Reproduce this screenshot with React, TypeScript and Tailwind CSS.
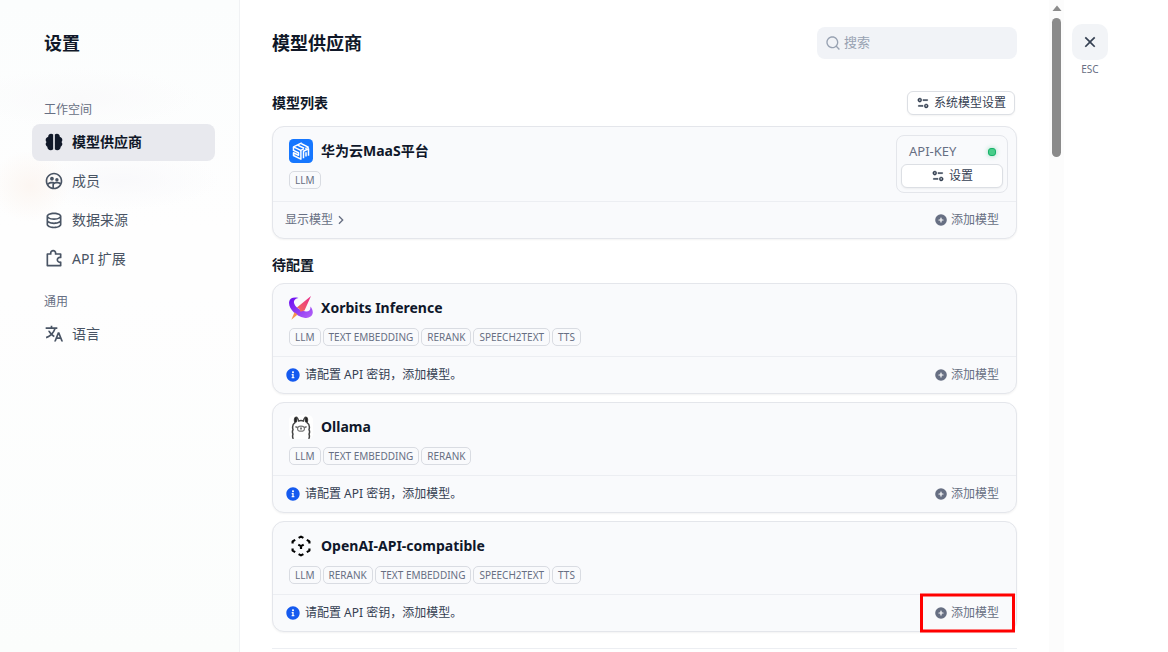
import type { ReactNode } from "react";
import {
  RiArrowRightSLine,
  RiBrain2Fill,
  RiCloseLine,
  RiDatabase2Line,
  RiEqualizer2Line,
  RiGroup2Line,
  RiInformation2Fill,
  RiPuzzle2Line,
  RiSearchLine,
  RiTranslate2,
} from "react-icons/ri";

function AddIcon() {
  return (
    <svg viewBox="0 0 14 14" className="size-3.5" aria-hidden="true">
      <circle cx="7" cy="7" r="5.8" fill="currentColor" />
      <path d="M7 5v4M5 7h4" stroke="#fff" strokeWidth="1.2" strokeLinecap="round" />
    </svg>
  );
}

function MaasLogo() {
  return (
    <svg viewBox="0 0 24 24" className="size-6" aria-hidden="true">
      <rect width="24" height="24" rx="4.5" fill="#1677ff" />
      <g fill="none" stroke="#fff" strokeWidth="1.5" strokeLinejoin="round">
        <path d="m12.800 3.800-8.300 4.100 7.200 3.500 3.100-1.500" />
        <path d="m8.500 6.100 6.700 3.200M12.400 4.800l6.900 3.300-3 1.500" />
        <path d="M4.500 8v3.400l5 2.400v2.400l-5-2.400v2.700l7.400 3.600v-8.500" />
        <path d="M14.500 19.200v-7l5-2.400v7M17 17.600v-4.400" />
      </g>
    </svg>
  );
}

function XorbitsLogo() {
  return (
    <svg viewBox="0 0 24 24" className="size-6" aria-hidden="true">
      <defs>
        <linearGradient id="xorbits-ring" x1="0" y1="0" x2="1" y2="1">
          <stop offset="0" stopColor="#6a0cf0" />
          <stop offset="1" stopColor="#b565f7" />
        </linearGradient>
        <linearGradient id="xorbits-needle" x1="1" y1="0" x2="0" y2="1">
          <stop offset="0" stopColor="#e9298c" />
          <stop offset="1" stopColor="#f5705a" />
        </linearGradient>
      </defs>
      <path
        d="M9.500 1.900C4.200.9.600 2.200.1 6c-.8 6.500 7 14.400 15 15.700 4.700.8 8-1 8.600-4.400.4-2.400-.6-4.800-2.300-6.800.4 3.500-1.300 5-4.400 4.900C11.500 15.200 5.200 10.500 4.900 6.300 4.800 4 6.400 2.500 9.500 1.900Z"
        fill="url(#xorbits-ring)"
      />
      <path d="M22 0 7.900 11.600l2.600 1.300 1 2.900 4-1.300Z" fill="url(#xorbits-needle)" />
      <path d="m5.500 16.300 3.100 2.200-6.200 5.200Z" fill="#f6934f" />
    </svg>
  );
}

function OllamaLogo() {
  return (
    <svg viewBox="0 0 24 24" className="size-6" aria-hidden="true">
      <rect width="24" height="24" rx="5" fill="#fff" />
      <g fill="none" stroke="#444" strokeWidth="1.500" strokeLinecap="round" strokeLinejoin="round">
        <path d="M4 23.300c-.6-1.500-.5-3 0-4.300-.8-1.400-.7-3 0-4.400C3.100 11.500 3.700 9 6 7.600 5.300 5 5.600 2.800 6.700 2.400c1.500-.4 2.500 1.600 2.800 3.700 1.600-.7 3.400-.7 5 0 .3-2.100 1.300-4.100 2.800-3.700 1.100.4 1.400 2.600.7 5.200 2.300 1.400 2.900 3.900 2 7 .7 1.400.8 3 0 4.400.5 1.300.6 2.800 0 4.300" />
        <path d="M6.900 3.500v3M17.100 3.500v3" stroke="#222" strokeWidth="2" />
        <path d="M6.800 11.800c1 .2 1.700.5 2 1M17.200 11.800c-1 .2-1.700.5-2 1" strokeWidth="1.200" />
        <ellipse cx="12" cy="13.700" rx="3.500" ry="2.500" stroke="#777" strokeWidth="1.200" />
        <path d="M12 13v1" strokeWidth="1.400" />
      </g>
    </svg>
  );
}

function CompatibleLogo() {
  return (
    <svg viewBox="0 0 24 24" className="size-6" aria-hidden="true">
      <g fill="none" stroke="#000" strokeWidth="2.200" strokeLinejoin="round">
        <path d="m9.600 3.900 2.400-1.300 2.400 1.300M9.600 20.100l2.400 1.300 2.400-1.300" />
        <path d="M6.200 5.900 3.600 7.400v2M17.800 5.900l2.600 1.500v2" />
        <path d="M3.600 14.600v2l2.600 1.500M20.400 14.600v2l-2.600 1.500" />
        <path d="m9.300 10.600 2.700 1.500 2.700-1.500M12 12.100v3" />
      </g>
    </svg>
  );
}

type NavItem = { label: string; icon: ReactNode; active?: boolean };

const workspaceItems: NavItem[] = [
  { label: "模型供应商", icon: <RiBrain2Fill className="size-5" />, active: true },
  { label: "成员", icon: <RiGroup2Line className="size-5" /> },
  { label: "数据来源", icon: <RiDatabase2Line className="size-5" /> },
  { label: "API 扩展", icon: <RiPuzzle2Line className="size-5" /> },
];

const generalItems: NavItem[] = [{ label: "语言", icon: <RiTranslate2 className="size-5" /> }];

function NavGroup({ title, items }: { title: string; items: NavItem[] }) {
  return (
    <section>
      <h2 className="mb-[5px] pl-3 text-xs leading-[18px] text-[#676f83]">{title}</h2>
      <ul className="flex flex-col gap-0.5">
        {items.map((item) => (
          <li key={item.label}>
            <button
              type="button"
              aria-current={item.active ? "page" : undefined}
              className={
                item.active
                  ? "flex h-[37px] w-full items-center gap-2 rounded-lg bg-[#e8e9ee] pb-px pl-3 text-sm font-semibold text-[#101828]"
                  : "flex h-[37px] w-full items-center gap-2 rounded-lg pb-px pl-3 text-sm text-[#495464]"
              }
            >
              {item.icon}
              {item.label}
            </button>
          </li>
        ))}
      </ul>
    </section>
  );
}

type Provider = { name: string; logo: ReactNode; tags: string[]; configured?: boolean; highlighted?: boolean };

const configuredProvider: Provider = {
  name: "华为云MaaS平台",
  logo: <MaasLogo />,
  tags: ["LLM"],
  configured: true,
};

const pendingProviders: Provider[] = [
  {
    name: "Xorbits Inference",
    logo: <XorbitsLogo />,
    tags: ["LLM", "TEXT EMBEDDING", "RERANK", "SPEECH2TEXT", "TTS"],
  },
  { name: "Ollama", logo: <OllamaLogo />, tags: ["LLM", "TEXT EMBEDDING", "RERANK"] },
  {
    name: "OpenAI-API-compatible",
    logo: <CompatibleLogo />,
    tags: ["LLM", "RERANK", "TEXT EMBEDDING", "SPEECH2TEXT", "TTS"],
    highlighted: true,
  },
];

function ProviderCard({ provider }: { provider: Provider }) {
  return (
    <article className="rounded-xl border border-[#e4e6eb] bg-[#f9fafc] shadow-xs">
      <div className="flex items-start justify-between">
        <div className="pt-3 pb-2.5 pl-4">
          <div className="flex h-6 items-center gap-2">
            {provider.logo}
            <h3 className="text-sm font-bold text-[#0f172a]">{provider.name}</h3>
          </div>
          <ul className="mt-2 flex gap-0.5">
            {provider.tags.map((tag) => (
              <li
                key={tag}
                className="h-[18px] rounded-[5px] border border-[#d9dce2] px-[5px] text-[10px] leading-4 text-[#676f83]"
              >
                {tag}
              </li>
            ))}
          </ul>
        </div>
        {provider.configured && (
          <div className="py-2 pr-2">
            <div className="w-28 rounded-lg border border-[#e4e6eb] p-1">
              <div className="flex h-6 items-center justify-between pr-[7px] pl-2 text-[13px] text-[#676f83]">
                API-KEY
                <span className="size-2 rounded-[3px] border border-[#17b26a] bg-[#47cd89] shadow-[0_0_5px_#17b26a66]" />
              </div>
              <button
                type="button"
                className="flex h-6 w-full items-center justify-center gap-1 rounded-md border border-[#dcdfe4] bg-white text-xs text-[#354052] shadow-xs"
              >
                <RiEqualizer2Line className="size-3.5 stroke-current stroke-[0.6]" />
                设置
              </button>
            </div>
          </div>
        )}
      </div>
      <div className="flex h-[37px] items-center justify-between border-t border-[#eceef2] pr-[17px] pl-3 text-xs">
        {provider.configured ? (
          <button type="button" className="flex items-center text-[#676f83]">
            显示模型
            <RiArrowRightSLine className="size-4" />
          </button>
        ) : (
          <p className="flex items-center gap-1 text-[#354052]">
            <RiInformation2Fill className="size-4 text-[#155aef]" />
            请配置 API 密钥，添加模型。
          </p>
        )}
        <div className="relative">
          <button type="button" className="flex items-center gap-[3px] text-[#676f83]">
            <AddIcon />
            添加模型
          </button>
          {provider.highlighted && (
            <span className="pointer-events-none absolute top-1/2 -right-4 -left-3.5 h-[39px] -translate-y-1/2 border-3 border-[#f00]" />
          )}
        </div>
      </div>
    </article>
  );
}

export default function App() {
  return (
    <div className="flex h-screen overflow-hidden bg-white font-['Noto_Sans','Noto_Sans_CJK_SC',sans-serif] text-[#101828]">
      <aside className="w-60 shrink-0 border-r border-[#f0f2f4] bg-[radial-gradient(ellipse_40px_36px_at_30px_186px,#fcf6f2,transparent),radial-gradient(ellipse_100px_30px_at_120px_180px,#f9f9fb,transparent),radial-gradient(ellipse_120px_30px_at_80px_98px,#fafafb,transparent),linear-gradient(#fbfdfd,#fefefe_35%,#fefefe_45%,#fbfdfc)] pr-6 pl-8">
        <h1 className="flex h-[86px] items-center pl-3 text-lg font-semibold">设置</h1>
        <nav className="flex flex-col gap-[15px] pt-[15px]">
          <NavGroup title="工作空间" items={workspaceItems} />
          <NavGroup title="通用" items={generalItems} />
        </nav>
      </aside>

      <main className="min-w-0 flex-1 overflow-y-auto px-8 [scrollbar-width:none]">
        <header className="flex h-[86px] items-center justify-between">
          <h2 className="text-lg font-semibold">模型供应商</h2>
          <label className="flex h-8 w-[200px] items-center gap-[3px] rounded-lg bg-[#f1f3f7] px-2">
            <RiSearchLine className="size-4 shrink-0 text-[#98a2b2]" />
            <input
              type="search"
              aria-label="搜索"
              placeholder="搜索"
              className="min-w-0 flex-1 bg-transparent text-[13px] outline-none placeholder:text-[#98a2b2]"
            />
          </label>
        </header>

        <div className="flex items-center justify-between pt-[5px] pr-0.5 pb-[11px]">
          <h3 className="text-sm leading-6 font-semibold">模型列表</h3>
          <button
            type="button"
            className="flex h-6 items-center gap-1 rounded-md border border-[#dcdfe4] bg-white px-2 text-xs text-[#354052] shadow-xs"
          >
            <RiEqualizer2Line className="size-3.5 stroke-current stroke-[0.6]" />
            系统模型设置
          </button>
        </div>
        <ProviderCard provider={configuredProvider} />

        <h3 className="pt-4 pb-2 text-sm leading-5 font-semibold">待配置</h3>
        <div className="flex flex-col gap-2">
          {pendingProviders.map((provider) => (
            <ProviderCard key={provider.name} provider={provider} />
          ))}
        </div>
        <hr className="mt-4 border-[#eceef2]" />
      </main>

      <div className="flex w-[15px] shrink-0 flex-col items-center bg-[#fcfcfc]" aria-hidden="true">
        <svg viewBox="0 0 10 18" className="h-[18px] w-2.5">
          <path d="M5 5.500 9.500 11h-9Z" fill="#8b8b8b" />
        </svg>
        <div className="h-[139px] w-[9px] rounded-full bg-[#8b8b8b]" />
      </div>

      <div className="w-[104px] shrink-0 pt-6 pl-2">
        <div className="flex w-9 flex-col items-center">
          <button
            type="button"
            aria-label="关闭"
            className="flex size-9 items-center justify-center rounded-[10px] bg-[#f2f4f7] text-[#354052]"
          >
            <RiCloseLine className="size-5" />
          </button>
          <span className="mt-px text-[10px] leading-4 text-[#676f83]">ESC</span>
        </div>
      </div>
    </div>
  );
}
